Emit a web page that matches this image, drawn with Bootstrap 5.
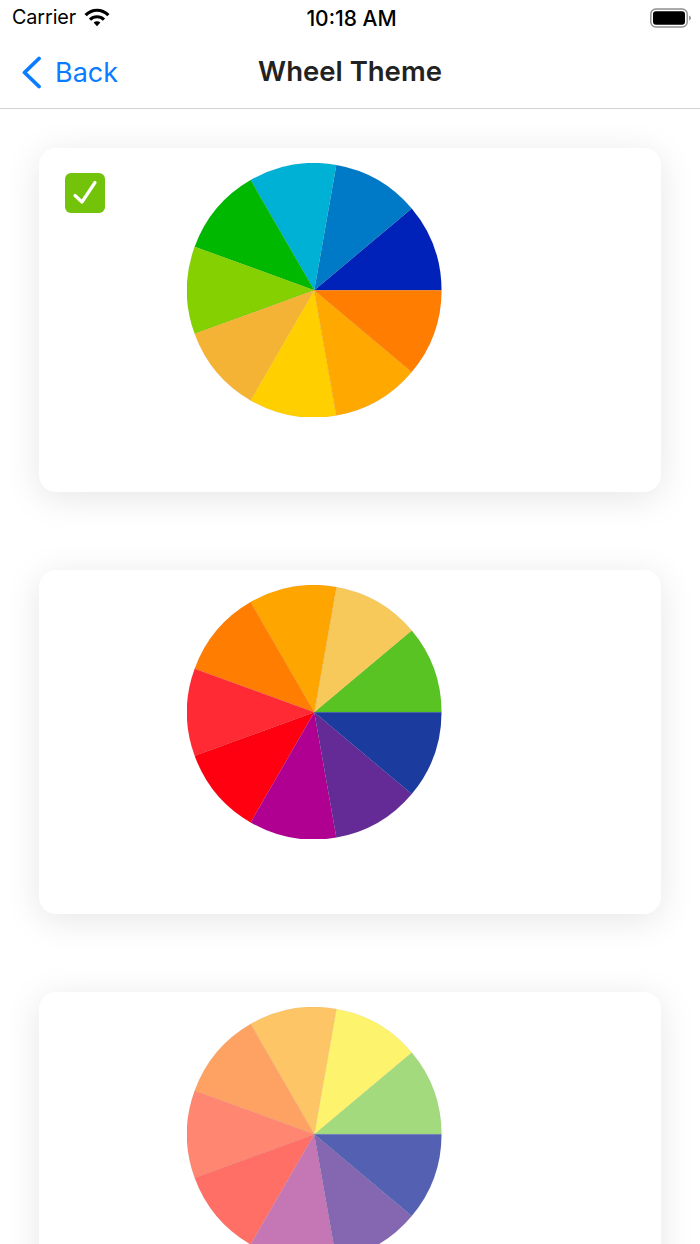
<!doctype html>
<html lang="en">
<head>
<meta charset="utf-8">
<title>Wheel Theme</title>
<link href="https://cdn.jsdelivr.net/npm/bootstrap@5.3.0/dist/css/bootstrap.min.css" rel="stylesheet">
<style>
html,body{height:100%;overflow:hidden;background:#fff;}
body{font-family:Inter,"Liberation Sans",sans-serif;color:#000;}
.status-row{height:36px;padding:0 8px 0 12px;display:grid;grid-template-columns:1fr auto 1fr;align-items:center;}
.carrier{font-size:19.8px;letter-spacing:-.1px;line-height:1;}
.clock{font-size:21px;font-weight:500;line-height:1;margin-left:-1px;}
.nav-row{height:73px;border-bottom:1px solid #d3d3d5;display:grid;grid-template-columns:1fr auto 1fr;align-items:center;padding:0 21px 0 21px;}
.back-link{color:#0a7cff;font-size:27px;line-height:1;text-decoration:none;gap:13px;}
.page-title{font-size:27.5px;font-weight:600;color:#222;line-height:1;margin:0;}
.cards{padding:39px 39px 0;}
.theme-tile{position:relative;height:344px;margin-bottom:78px;background:#fff;border:0;border-radius:17px;box-shadow:0 6px 36px rgba(0,0,0,.1);padding:14.5px 0 0 148px;}
.wheel{display:block;width:254.5px;height:254.5px;}
.wheel use{stroke:rgba(0,0,0,.07);stroke-width:.5px;}
.tick{position:absolute;left:26px;top:25px;width:40px;height:40px;border-radius:6px;background:#72c30a;}
</style>
</head>
<body>
<div class="status-row">
  <div class="d-flex align-items-center" style="gap:8px">
    <span class="carrier">Carrier</span>
    <svg width="26" height="19" viewBox="0 0 26 19" aria-hidden="true"><g fill="none" stroke="#000" stroke-width="3.2"><path d="M1.6 7.2C8.4 .6 17.6 .6 24.4 7.2"/><path d="M6 11.6C10 7.8 16 7.8 20 11.6"/></g><path d="M9.6 14.6C11.6 12.9 14.4 12.9 16.4 14.6L13 18.2Z" fill="#000"/></svg>
  </div>
  <span class="clock">10:18 AM</span>
  <div class="d-flex justify-content-end">
    <svg width="42" height="20" viewBox="0 0 42 20" aria-hidden="true"><rect x=".8" y="1" width="36.4" height="18" rx="5" fill="#fff" stroke="#8e8e8e" stroke-width="1.4"/><rect x="3" y="3.2" width="32" height="13.6" rx="3" fill="#000"/><path d="M39 7.5C40.2 8 41 9 41 10S40.2 12 39 12.5Z" fill="#9a9a9a"/></svg>
  </div>
</div>
<nav class="nav-row">
  <a class="back-link d-inline-flex align-items-center" href="#">
    <svg width="21" height="33" viewBox="0 0 21 33" aria-hidden="true"><path d="M18 2.5 3.5 16.5 18 30.5" fill="none" stroke="#0a7cff" stroke-width="3.8" stroke-linecap="round" stroke-linejoin="round"/></svg>
    <span>Back</span>
  </a>
  <h1 class="page-title">Wheel Theme</h1>
  <span></span>
</nav>
<svg width="0" height="0" class="d-block" aria-hidden="true"><defs><path id="seg" d="M0 0H127.5A127.5 127.5 0 0 0 97.67-81.96Z"/></defs></svg>
<main class="cards">
  <div class="card theme-tile">
    <span class="tick d-flex align-items-center justify-content-center">
      <svg width="26" height="26" viewBox="0 0 26 26" aria-hidden="true"><path d="M3 15.5 10 22 23 2.5" fill="none" stroke="#fff" stroke-width="3.2" stroke-linecap="round" stroke-linejoin="round"/></svg>
    </span>
    <svg class="wheel" viewBox="-127.5 -127.5 255 255" aria-hidden="true">
      <use href="#seg" fill="#0022b8"/>
      <use href="#seg" fill="#007ac7" transform="rotate(-40)"/>
      <use href="#seg" fill="#00b1d6" transform="rotate(-80)"/>
      <use href="#seg" fill="#00b800" transform="rotate(-120)"/>
      <use href="#seg" fill="#84d000" transform="rotate(-160)"/>
      <use href="#seg" fill="#f5b335" transform="rotate(-200)"/>
      <use href="#seg" fill="#ffcf00" transform="rotate(-240)"/>
      <use href="#seg" fill="#ffa800" transform="rotate(-280)"/>
      <use href="#seg" fill="#ff7d00" transform="rotate(-320)"/>
    </svg>
  </div>
  <div class="card theme-tile">
    <svg class="wheel" viewBox="-127.5 -127.5 255 255" aria-hidden="true">
      <use href="#seg" fill="#58c322"/>
      <use href="#seg" fill="#f7c85a" transform="rotate(-40)"/>
      <use href="#seg" fill="#ffa500" transform="rotate(-80)"/>
      <use href="#seg" fill="#ff7d00" transform="rotate(-120)"/>
      <use href="#seg" fill="#ff2a33" transform="rotate(-160)"/>
      <use href="#seg" fill="#ff0010" transform="rotate(-200)"/>
      <use href="#seg" fill="#b00092" transform="rotate(-240)"/>
      <use href="#seg" fill="#642a96" transform="rotate(-280)"/>
      <use href="#seg" fill="#1b3b9e" transform="rotate(-320)"/>
    </svg>
  </div>
  <div class="card theme-tile">
    <svg class="wheel" viewBox="-127.5 -127.5 255 255" aria-hidden="true">
      <use href="#seg" fill="#a3da7e"/>
      <use href="#seg" fill="#fdf36d" transform="rotate(-40)"/>
      <use href="#seg" fill="#fec566" transform="rotate(-80)"/>
      <use href="#seg" fill="#fea263" transform="rotate(-120)"/>
      <use href="#seg" fill="#ff8670" transform="rotate(-160)"/>
      <use href="#seg" fill="#ff6f66" transform="rotate(-200)"/>
      <use href="#seg" fill="#c577b5" transform="rotate(-240)"/>
      <use href="#seg" fill="#8467b0" transform="rotate(-280)"/>
      <use href="#seg" fill="#5461b3" transform="rotate(-320)"/>
    </svg>
  </div>
</main>
<script src="https://cdn.jsdelivr.net/npm/bootstrap@5.3.0/dist/js/bootstrap.bundle.min.js"></script>
</body>
</html>
